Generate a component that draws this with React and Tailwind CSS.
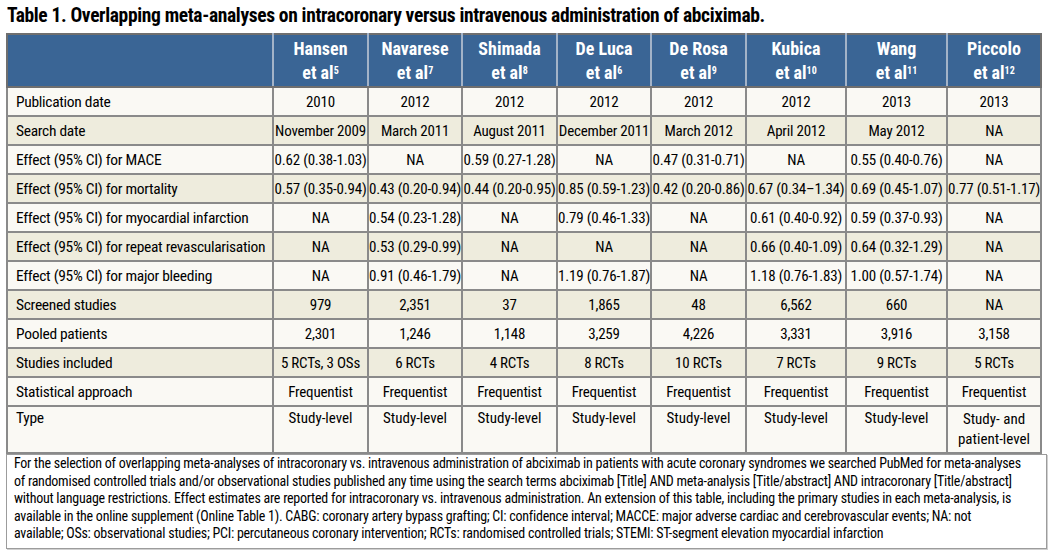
import React from "react";

const cols = [
  { name: "Hansen", ref: "5" },
  { name: "Navarese", ref: "7" },
  { name: "Shimada", ref: "8" },
  { name: "De Luca", ref: "6" },
  { name: "De Rosa", ref: "9" },
  { name: "Kubica", ref: "10" },
  { name: "Wang", ref: "11" },
  { name: "Piccolo", ref: "12" },
];

const widths = ["w-[266px]", "w-[95px]", "w-[94px]", "w-[95px]", "w-[94px]", "w-[95px]", "w-[100px]", "w-[101px]", "w-[94px]"];

const rows = [
  ["Publication date", "2010", "2012", "2012", "2012", "2012", "2012", "2013", "2013"],
  ["Search date", "November 2009", "March 2011", "August 2011", "December 2011", "March 2012", "April 2012", "May 2012", "NA"],
  ["Effect (95% CI) for MACE", "0.62 (0.38-1.03)", "NA", "0.59 (0.27-1.28)", "NA", "0.47 (0.31-0.71)", "NA", "0.55 (0.40-0.76)", "NA"],
  ["Effect (95% CI) for mortality", "0.57 (0.35-0.94)", "0.43 (0.20-0.94)", "0.44 (0.20-0.95)", "0.85 (0.59-1.23)", "0.42 (0.20-0.86)", "0.67 (0.34\u20131.34)", "0.69 (0.45-1.07)", "0.77 (0.51-1.17)"],
  ["Effect (95% CI) for myocardial infarction", "NA", "0.54 (0.23-1.28)", "NA", "0.79 (0.46-1.33)", "NA", "0.61 (0.40-0.92)", "0.59 (0.37-0.93)", "NA"],
  ["Effect (95% CI) for repeat revascularisation", "NA", "0.53 (0.29-0.99)", "NA", "NA", "NA", "0.66 (0.40-1.09)", "0.64 (0.32-1.29)", "NA"],
  ["Effect (95% CI) for major bleeding", "NA", "0.91 (0.46-1.79)", "NA", "1.19 (0.76-1.87)", "NA", "1.18 (0.76-1.83)", "1.00 (0.57-1.74)", "NA"],
  ["Screened studies", "979", "2,351", "37", "1,865", "48", "6,562", "660", "NA"],
  ["Pooled patients", "2,301", "1,246", "1,148", "3,259", "4,226", "3,331", "3,916", "3,158"],
  ["Studies included", "5 RCTs, 3 OSs", "6 RCTs", "4 RCTs", "8 RCTs", "10 RCTs", "7 RCTs", "9 RCTs", "5 RCTs"],
  ["Statistical approach", "Frequentist", "Frequentist", "Frequentist", "Frequentist", "Frequentist", "Frequentist", "Frequentist", "Frequentist"],
];

const notes = [
  "For the selection of overlapping meta-analyses of intracoronary vs. intravenous administration of abciximab in patients with acute coronary syndromes we searched PubMed for meta-analyses",
  "of randomised controlled trials and/or observational studies published any time using the search terms abciximab [Title] AND meta-analysis [Title/abstract] AND intracoronary [Title/abstract]",
  "without language restrictions. Effect estimates are reported for intracoronary vs. intravenous administration. An extension of this table, including the primary studies in each meta-analysis, is",
  "available in the online supplement (Online Table 1). CABG: coronary artery bypass grafting; CI: confidence interval; MACCE: major adverse cardiac and cerebrovascular events; NA: not",
  "available; OSs: observational studies; PCI: percutaneous coronary intervention; RCTs: randomised controlled trials; STEMI: ST-segment elevation myocardial infarction",
];

export default function App() {
  return (
    <div className="w-[1052px] h-[553px] bg-white text-black px-[6px] pt-[3px] font-['Roboto',sans-serif] [font-stretch:75%]">
      <h1 className="text-[19.5px] font-bold leading-[26px] pl-[1px] tracking-[-0.35px]">
        Table 1. Overlapping meta-analyses on intracoronary versus intravenous administration of abciximab.
      </h1>

      <table className="mt-[4px] w-[1034px] table-fixed border-collapse text-[15.5px] leading-[18px]">
        <colgroup>
          {widths.map((w, i) => (
            <col key={i} className={w} />
          ))}
        </colgroup>
        <thead>
          <tr className="h-[53px] bg-[#3a6595] text-white">
            <th className="border-2 border-[#6f6f6f] border-r-[#a3b3c8]"></th>
            {cols.map((c, i) => (
              <th
                key={c.name}
                className={
                  i === cols.length - 1
                    ? "border-y-2 border-r-2 border-[#6f6f6f] px-1 text-center text-[18px] font-bold leading-[24px]"
                    : "border-y-2 border-r-2 border-[#6f6f6f] border-r-[#a3b3c8] px-1 text-center text-[18px] font-bold leading-[24px]"
                }
              >
                {c.name}
                <br />
                et al<sup className="text-[10px] font-bold">{c.ref}</sup>
              </th>
            ))}
          </tr>
        </thead>
        <tbody>
          {rows.map((r, ri) => (
            <tr key={ri} className={ri % 2 === 0 ? "h-[29px] bg-[#faf9f4]" : "h-[29px] bg-[#eeecdd]"}>
              {r.map((cell, ci) =>
                ci === 0 ? (
                  <td key={ci} className="border-2 border-[#8a8a8a] pl-[8px] text-left whitespace-nowrap tracking-[-0.3px]">
                    {cell}
                  </td>
                ) : (
                  <td key={ci} className="border-2 border-[#8a8a8a] px-0 text-center whitespace-nowrap text-[15px] tracking-[-0.2px]">
                    {cell}
                  </td>
                )
              )}
            </tr>
          ))}
          <tr className="h-[47px] bg-[#faf9f4] align-top">
            <td className="border-2 border-[#8a8a8a] pl-[8px] pt-[2px] tracking-[-0.3px]">Type</td>
            {["Study-level", "Study-level", "Study-level", "Study-level", "Study-level", "Study-level", "Study-level"].map((t, i) => (
              <td key={i} className="border-2 border-[#8a8a8a] pt-[2px] text-center text-[15px]">
                {t}
              </td>
            ))}
            <td className="border-2 border-[#8a8a8a] pt-[2px] text-center text-[15px] leading-[20px]">
              Study- and
              <br />
              patient-level
            </td>
          </tr>
        </tbody>
      </table>

      <div className="w-[1041px] border border-[#9c9c9c] bg-white px-[7px] pt-0 pb-[5px] text-[14px] leading-[17.5px] tracking-[-0.25px] shadow-[1px_1px_0_#d0d0d0]">
        {notes.map((n, i) => (
          <div key={i} className="whitespace-nowrap">
            {n}
          </div>
        ))}
      </div>
    </div>
  );
}
